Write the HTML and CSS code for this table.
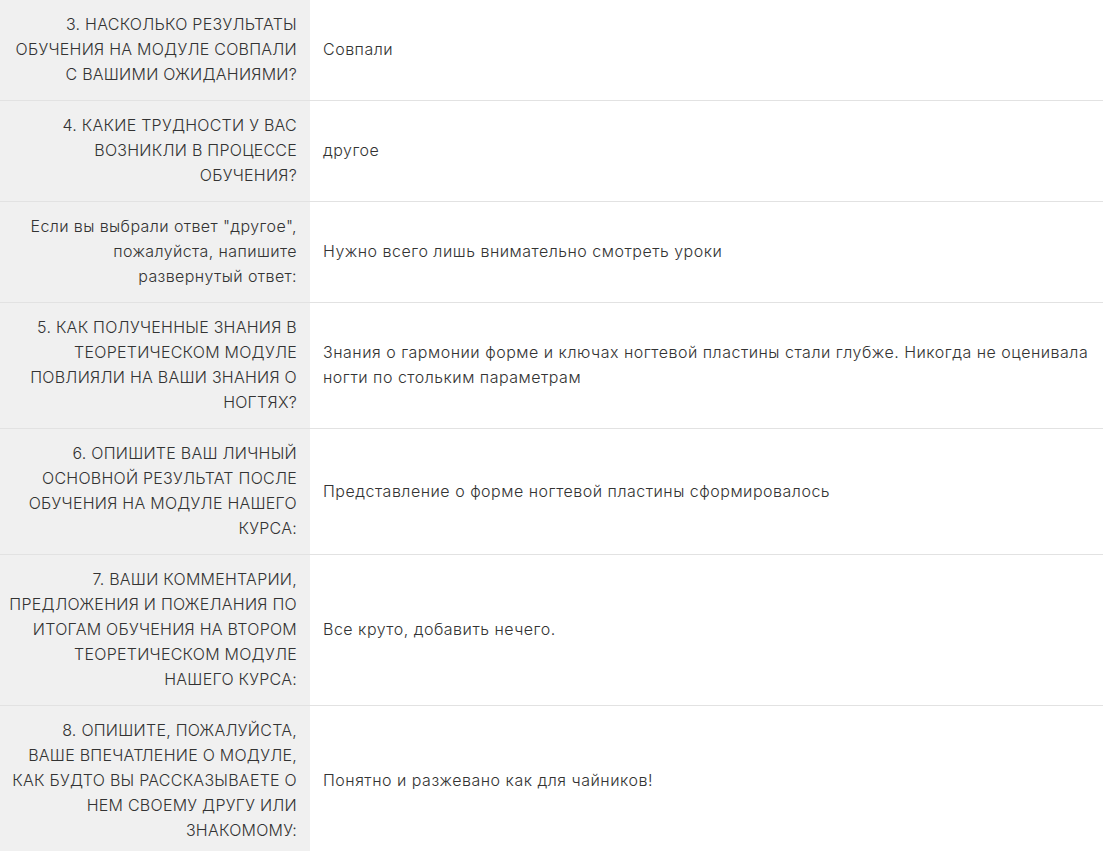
FILE: index.html
```html
<!DOCTYPE html>
<html lang="ru">
<head>
<meta charset="UTF-8">
<meta name="viewport" content="width=device-width, initial-scale=1.0">
<title>Ответы на анкету</title>
<link rel="stylesheet" href="styles.css">
</head>
<body>

<table class="answers">
    <tr>
        <th>3. НАСКОЛЬКО РЕЗУЛЬТАТЫ<br>ОБУЧЕНИЯ НА МОДУЛЕ СОВПАЛИ<br>С ВАШИМИ ОЖИДАНИЯМИ?</th>
        <td>Совпали</td>
    </tr>
    <tr>
        <th>4. КАКИЕ ТРУДНОСТИ У ВАС<br>ВОЗНИКЛИ В ПРОЦЕССЕ<br>ОБУЧЕНИЯ?</th>
        <td>другое</td>
    </tr>
    <tr>
        <th class="plain">Если вы выбрали ответ "другое",<br>пожалуйста, напишите<br>развернутый ответ:</th>
        <td>Нужно всего лишь внимательно смотреть уроки</td>
    </tr>
    <tr>
        <th>5. КАК ПОЛУЧЕННЫЕ ЗНАНИЯ В<br>ТЕОРЕТИЧЕСКОМ МОДУЛЕ<br>ПОВЛИЯЛИ НА ВАШИ ЗНАНИЯ О<br>НОГТЯХ?</th>
        <td>Знания о гармонии форме и ключах ногтевой пластины стали глубже. Никогда не оценивала ногти по стольким параметрам</td>
    </tr>
    <tr>
        <th>6. ОПИШИТЕ ВАШ ЛИЧНЫЙ<br>ОСНОВНОЙ РЕЗУЛЬТАТ ПОСЛЕ<br>ОБУЧЕНИЯ НА МОДУЛЕ НАШЕГО<br>КУРСА:</th>
        <td>Представление о форме ногтевой пластины сформировалось</td>
    </tr>
    <tr>
        <th>7. ВАШИ КОММЕНТАРИИ,<br>ПРЕДЛОЖЕНИЯ И ПОЖЕЛАНИЯ ПО<br>ИТОГАМ ОБУЧЕНИЯ НА ВТОРОМ<br>ТЕОРЕТИЧЕСКОМ МОДУЛЕ<br>НАШЕГО КУРСА:</th>
        <td>Все круто, добавить нечего.</td>
    </tr>
    <tr>
        <th>8. ОПИШИТЕ, ПОЖАЛУЙСТА,<br>ВАШЕ ВПЕЧАТЛЕНИЕ О МОДУЛЕ,<br>КАК БУДТО ВЫ РАССКАЗЫВАЕТЕ О<br>НЕМ СВОЕМУ ДРУГУ ИЛИ<br>ЗНАКОМОМУ:</th>
        <td>Понятно и разжевано как для чайников!</td>
    </tr>
</table>

</body>
</html>
```

FILE: styles.css
```css
body {
    margin: 0;
    padding: 0;
    background-color: #ffffff;
    font-family: Inter, "Noto Sans", sans-serif;
    font-weight: 300;
    color: #333333;
}
.answers {
    width: 100%;
    border-collapse: collapse;
    font-size: 16px;
    line-height: 25px;
}
.answers tr {
    border-bottom: 1px solid #e2e2e2;
}
.answers th {
    width: 289px;
    padding: 12px 13px 13px 8px;
    background-color: #f0f0f0;
    text-align: right;
    font-weight: 300;
    white-space: nowrap;
    letter-spacing: 0.25px;
    vertical-align: middle;
}
.answers th.plain {
    letter-spacing: 0.4px;
}
.answers td {
    padding: 12px 5px 13px 13px;
    text-align: left;
    vertical-align: middle;
    letter-spacing: 0.5px;
}
```
